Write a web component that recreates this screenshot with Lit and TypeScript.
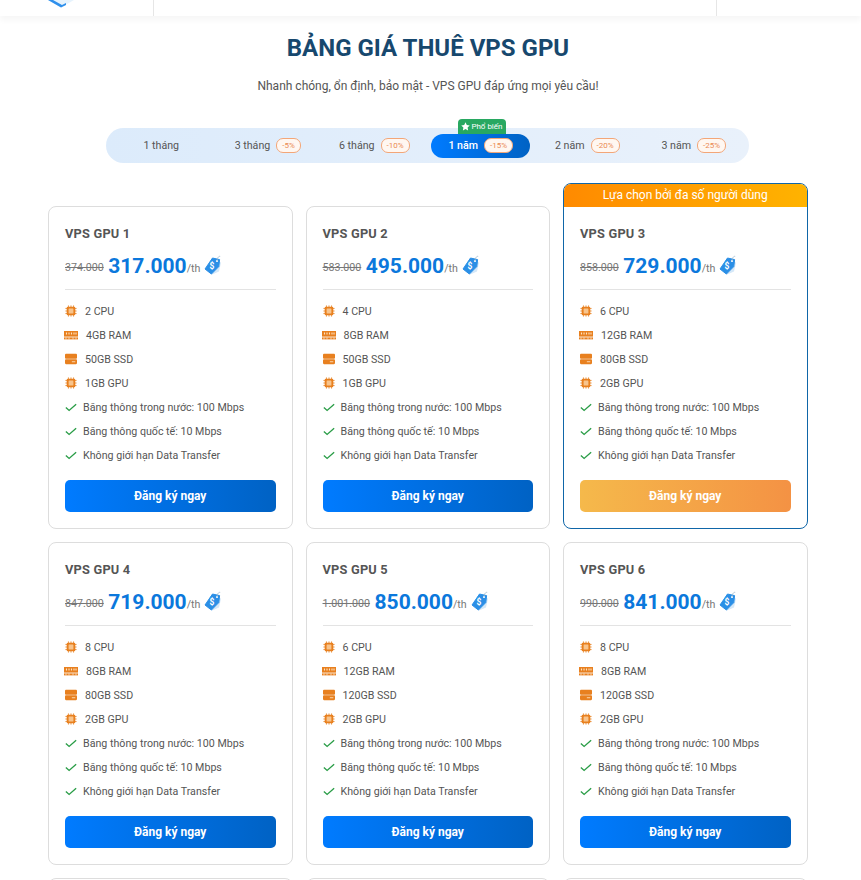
import { LitElement, html, css, svg } from "lit";
import { customElement } from "lit/decorators.js";

const chip = svg`<svg class="ic" viewBox="0 0 14 14" width="12" height="14"><g stroke="#e8872a" stroke-width="1"><path d="M4 0.5v13M7 0.5v13M10 0.5v13M0.5 4h13M0.5 7h13M0.5 10h13"/></g><rect x="2" y="2" width="10" height="10" rx="1.5" fill="#e8801f"/><rect x="4.2" y="4.2" width="5.6" height="5.6" rx=".6" fill="#f8c48c"/></svg>`;
const ram = svg`<svg class="ic ram" viewBox="0 0 14 9" width="14" height="9"><rect x="0" y="0" width="14" height="5.6" fill="#e8801f"/><path d="M2.5 1.6v2M5 1.6v2M7.5 1.6v2M10 1.6v2M12 1.6v2" stroke="#fde3c4" stroke-width="1.1"/><rect x="0" y="6.4" width="14" height="2" fill="#e8801f"/><path d="M2 6.4v2M5 6.4v2M9 6.4v2M12 6.4v2" stroke="#fff" stroke-width=".6"/></svg>`;
const ssd = svg`<svg class="ic" viewBox="0 0 14 14" width="12" height="14"><rect x="0" y="1" width="14" height="5.6" rx="1.2" fill="#e8801f"/><rect x="0" y="7.4" width="14" height="5.6" rx="1.2" fill="#e8801f"/><path d="M8 10.2h4" stroke="#fde3c4" stroke-width="1"/></svg>`;
const check = svg`<svg class="ic chk" viewBox="0 0 14 14" width="12" height="14"><path d="M1 7.6l3.8 3.4L13 3.8" fill="none" stroke="#2a9d47" stroke-width="1.6"/></svg>`;
const tag = svg`<svg class="tagic" viewBox="0 0 18 20" width="18" height="20"><path d="M9 5L17 7.5 15 16.5 7.5 19.8 3 16z" fill="#d5e8f8"/><path d="M8.5 3L15.6 4.6 14.8 11.6 7.4 19 1 14z" fill="#2b8fe6" stroke="#2b8fe6" stroke-linejoin="round"/><circle cx="13" cy="6" r="1.1" fill="#fff"/><path d="M13 6C13.2 3 14.6 .9 16.2 1.4" fill="none" stroke="#9db7cc" stroke-width=".8"/><text x="8" y="14.4" font-size="8.5" font-weight="700" font-family="Roboto, sans-serif" fill="#fff" text-anchor="middle">$</text></svg>`;
const star = svg`<svg viewBox="0 0 10 10" width="9" height="9"><path d="M5 .4l1.45 3 3.25.45-2.37 2.27.58 3.24L5 7.8 2.1 9.36l.57-3.24L.3 3.85l3.25-.45z" fill="#fff"/></svg>`;

const tabs: [string, string, boolean?][] = [
  ["1 tháng", ""],
  ["3 tháng", "-5%"],
  ["6 tháng", "-10%"],
  ["1 năm", "-15%", true],
  ["2 năm", "-20%"],
  ["3 năm", "-25%"],
];

const plans = [
  { n: 1, old: "374.000", p: "317.000", cpu: "2 CPU", ram: "4GB RAM", ssd: "50GB SSD", gpu: "1GB GPU" },
  { n: 2, old: "583.000", p: "495.000", cpu: "4 CPU", ram: "8GB RAM", ssd: "50GB SSD", gpu: "1GB GPU" },
  { n: 3, old: "858.000", p: "729.000", cpu: "6 CPU", ram: "12GB RAM", ssd: "80GB SSD", gpu: "2GB GPU", featured: true },
  { n: 4, old: "847.000", p: "719.000", cpu: "8 CPU", ram: "8GB RAM", ssd: "80GB SSD", gpu: "2GB GPU" },
  { n: 5, old: "1.001.000", p: "850.000", cpu: "6 CPU", ram: "12GB RAM", ssd: "120GB SSD", gpu: "2GB GPU" },
  { n: 6, old: "990.000", p: "841.000", cpu: "8 CPU", ram: "8GB RAM", ssd: "120GB SSD", gpu: "2GB GPU" },
];

@customElement("app-root")
export class AppRoot extends LitElement {
  static styles = css`
    :host { display: block; height: 880px; overflow: hidden; background: #fff; font-family: Roboto, "Liberation Sans", sans-serif; color: #555; }
    .top { display: flex; height: 16px; background: #fff; box-shadow: 0 4px 6px rgba(0,0,0,.04); overflow: hidden; position: relative; }
    .logo { flex: none; width: 105px; padding-left: 48px; border-right: 1px solid #e6e6e6; display: flex; align-items: flex-start; }
    .mid { flex: 1; }
    .end { width: 144px; border-left: 1px solid #e6e6e6; }
    h1 { margin: 21px 5px 0 0; height: 22px; line-height: 22px; text-align: center; font-size: 24px; font-weight: 700; color: #17486e; }
    .sub { margin: 17px 5px 0 0; height: 20px; line-height: 20px; text-align: center; font-size: 12px; color: #555; }
    .tabs { margin: 32px 112px 0 106px; height: 35px; border-radius: 18px; background: linear-gradient(90deg, #dcebfb, #e9f1fb); display: grid; grid-template-columns: repeat(6, 1fr); padding: 0 2px; align-items: center; justify-items: center; }
    .tab { position: relative; height: 24px; display: inline-flex; align-items: center; gap: 6px; padding: 0 17px; border-radius: 12px; font-size: 10.67px; color: #555; white-space: nowrap; }
    .tab.on { background: linear-gradient(90deg, #007bff, #0062c4); color: #fff; font-weight: 500; }
    .badge { height: 15px; line-height: 13px; box-sizing: border-box; padding: 0 5px; border: 1px solid #f3a678; border-radius: 7px; font-size: 8px; font-weight: 400; color: #ea8a52; background: #fff7f1; }
    .pop { position: absolute; left: 27px; top: -15px; height: 15px; padding: 0 4px 0 3px; display: flex; align-items: center; gap: 1px; background: #28a861; border-radius: 4px 4px 0 0; color: #fff; font-size: 8px; font-weight: 400; }
    .grid { margin: 19.5px 53.5px 0 48px; display: grid; grid-template-columns: repeat(3, 1fr); gap: 13px; align-items: end; }
    .card { background: #fff; border: 1px solid #ddd; border-radius: 8px; overflow: hidden; box-sizing: border-box; }
    .card.feat { border-color: #0f66a8; }
    .banner { height: 23px; line-height: 23px; text-align: center; font-size: 12px; color: #fff; background: linear-gradient(90deg, #ff8a00, #ffb300); }
    .body { padding: 16.5px 16px 0; height: 321px; box-sizing: border-box; display: flex; flex-direction: column; }
    .name { height: 21px; line-height: 21px; font-size: 12.8px; font-weight: 700; color: #555; letter-spacing: .2px; }
    .price { margin-top: 10px; height: 24px; display: flex; align-items: center; white-space: nowrap; }
    .old { font-size: 10.67px; color: #777; text-decoration: line-through; margin-right: 4.5px; padding-top: 3px; }
    .now { font-size: 21px; font-weight: 700; color: #0b78dc; line-height: 24px; }
    .per { font-size: 10.67px; color: #777; padding-top: 4px; }
    .tagic { margin-left: 4px; margin-top: -2px; }
    hr { border: none; border-top: 1px solid #e3e3e3; margin: 11px 0 9px; width: 100%; }
    ul { list-style: none; margin: 0; padding: 0; }
    li { height: 24px; display: flex; align-items: center; font-size: 10.67px; color: #555; white-space: nowrap; }
    .ic { flex: none; margin-right: 8px; }
    .ic.ram { margin-left: -1px; margin-right: 8px; }
    .ic.chk { margin-right: 6px; }
    .btn { margin-top: 13px; height: 32px; line-height: 32px; text-align: center; border-radius: 5px; font-size: 12px; font-weight: 700; color: #fff; background: linear-gradient(90deg, #007bff, #0062c4); }
    .feat .btn { background: linear-gradient(90deg, #f5b94b, #f49244); }
  `;

  private renderCard(c: (typeof plans)[number] & { featured?: boolean }) {
    return html`
      <div class="card ${c.featured ? "feat" : ""}">
        ${c.featured ? html`<div class="banner">Lựa chọn bởi đa số người dùng</div>` : ""}
        <div class="body">
          <div class="name">VPS GPU ${c.n}</div>
          <div class="price">
            <span class="old">${c.old}</span><span class="now">${c.p}</span><span class="per">/th</span>${tag}
          </div>
          <hr />
          <ul>
            <li>${chip}${c.cpu}</li>
            <li>${ram}${c.ram}</li>
            <li>${ssd}${c.ssd}</li>
            <li>${chip}${c.gpu}</li>
            <li>${check}Băng thông trong nước: 100 Mbps</li>
            <li>${check}Băng thông quốc tế: 10 Mbps</li>
            <li>${check}Không giới hạn Data Transfer</li>
          </ul>
          <div class="btn">Đăng ký ngay</div>
        </div>
      </div>
    `;
  }

  render() {
    return html`
      <div class="top">
        <div class="logo">
          <svg viewBox="0 0 30 8" width="30" height="8"><path d="M0 0h26L13 7.5z" fill="#e6f3fd"/><path d="M0 0h5l9 5 4-2v2l-5 2.6z" fill="#2f90ec"/></svg>
        </div>
        <div class="mid"></div>
        <div class="end"></div>
      </div>
      <h1>BẢNG GIÁ THUÊ VPS GPU</h1>
      <p class="sub">Nhanh chóng, ổn định, bảo mật - VPS GPU đáp ứng mọi yêu cầu!</p>
      <div class="tabs">
        ${tabs.map(([t, b, on]) => html`
          <div class="tab ${on ? "on" : ""}">
            ${on ? html`<div class="pop">${star}Phổ biến</div>` : ""}
            ${t}${b ? html`<span class="badge">${b}</span>` : ""}
          </div>
        `)}
      </div>
      <div class="grid">
        ${plans.map((c) => this.renderCard(c))}
        <div class="card"><div class="body"></div></div>
        <div class="card"><div class="body"></div></div>
        <div class="card"><div class="body"></div></div>
      </div>
    `;
  }
}
